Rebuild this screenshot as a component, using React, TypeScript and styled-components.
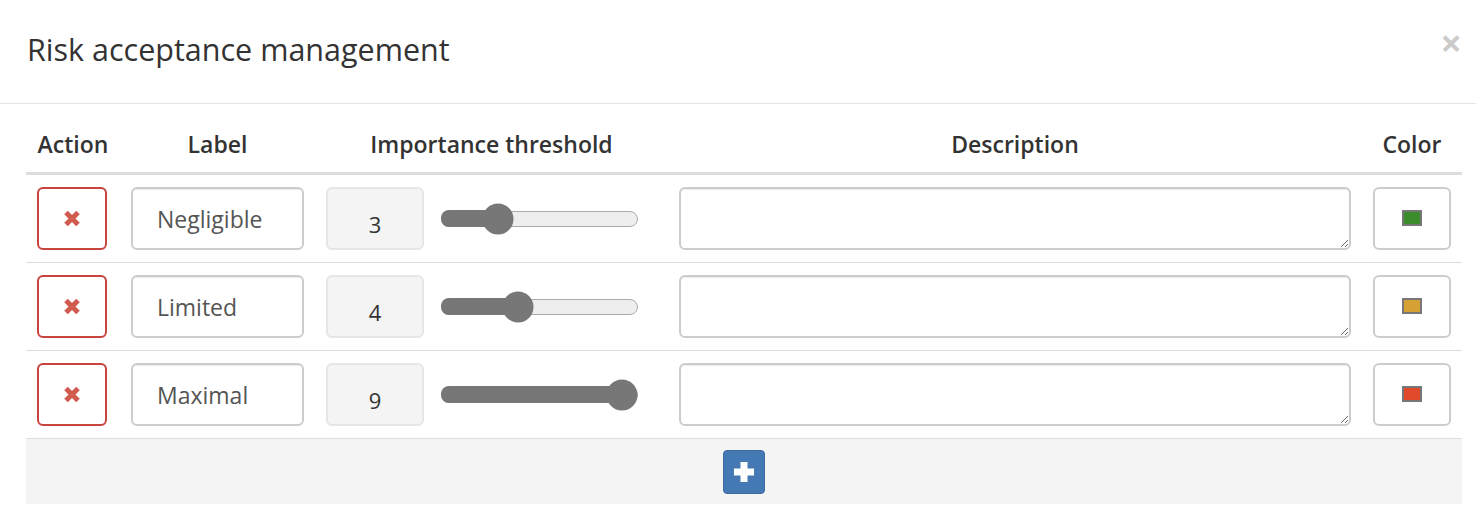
import React from "react";
import styled, { createGlobalStyle } from "styled-components";

const GlobalStyle = createGlobalStyle`
  html, body {
    margin: 0;
    padding: 0;
    background: #fff;
    font-family: "Open Sans", "Noto Sans", sans-serif;
    color: #333;
  }
`;

const StyledModal = styled.div`
  width: 1476px;
  display: flex;
  flex-direction: column;
`;

const StyledHeader = styled.div`
  height: 104px;
  border-bottom: 1.5px solid #e5e5e5;
  display: flex;
  align-items: center;
  justify-content: space-between;
  padding: 0 14px 6px 27px;
  box-sizing: border-box;
`;

const StyledTitle = styled.h4`
  margin: 0;
  font-size: 30.5px;
  font-weight: 400;
  color: #333;
`;

const StyledClose = styled.button`
  border: 0;
  background: transparent;
  padding: 0;
  margin-top: -14px;
  font-size: 38px;
  font-weight: 700;
  line-height: 1;
  color: #000;
  opacity: 0.2;
  cursor: pointer;
  font-family: "Open Sans", sans-serif;
`;

const StyledBody = styled.div`
  padding: 22px 14px 12px 26px;
`;

const StyledGrid = styled.div<{ $head?: boolean }>`
  display: grid;
  grid-template-columns: 72px 173px 331px 1fr 78px;
  column-gap: 22px;
  padding: ${(p) => (p.$head ? "2px 11px 12px" : "12px 11px")};
  border-bottom: ${(p) => (p.$head ? "3px solid #ddd" : "1.5px solid #ddd")};
  align-items: center;
`;

const StyledTh = styled.div`
  font-size: 23px;
  font-weight: 600;
  line-height: 32px;
  text-align: center;
  color: #333;
  white-space: nowrap;
`;

const StyledDeleteButton = styled.button`
  width: 70px;
  height: 63px;
  box-sizing: border-box;
  border: 2px solid #c9443c;
  border-radius: 6px;
  background: #fff;
  display: flex;
  align-items: center;
  justify-content: center;
  padding: 0;
  cursor: pointer;
`;

const StyledInput = styled.input`
  width: 100%;
  height: 63px;
  box-sizing: border-box;
  border: 2px solid #ccc;
  border-radius: 6px;
  padding: 0 0 0 24px;
  font-family: "Open Sans", sans-serif;
  font-size: 23px;
  color: #555;
  box-shadow: inset 0 1px 1px rgba(0, 0, 0, 0.075);
  outline: none;
`;

const StyledThreshold = styled.div`
  display: flex;
  align-items: center;
  gap: 17px;
`;

const StyledNumber = styled.div`
  width: 98px;
  height: 63px;
  box-sizing: border-box;
  border: 2px solid #e6e6e6;
  border-radius: 6px;
  background: #f4f4f4;
  display: flex;
  align-items: center;
  justify-content: center;
  padding-top: 10px;
  font-size: 22px;
  color: #333;
`;

const StyledTrack = styled.div`
  position: relative;
  width: 197px;
  height: 16px;
  box-sizing: border-box;
  border: 1.5px solid #aaa;
  border-radius: 8px;
  background: #eee;
`;

const StyledFill = styled.div`
  height: 100%;
  border-radius: 8px 0 0 8px;
  background: #777;
  margin: -1.5px 0 0 -1.5px;
  padding-top: 3px;
  box-sizing: content-box;
`;

const StyledThumb = styled.div`
  position: absolute;
  top: 50%;
  width: 31px;
  height: 31px;
  border-radius: 50%;
  background: #777;
  transform: translate(-50%, -50%);
`;

const StyledTextarea = styled.textarea`
  width: 100%;
  height: 63px;
  box-sizing: border-box;
  border: 2px solid #ccc;
  border-radius: 6px;
  resize: vertical;
  font-family: "Open Sans", sans-serif;
  font-size: 18px;
  box-shadow: inset 0 1px 1px rgba(0, 0, 0, 0.075);
  outline: none;
  display: block;
`;

const StyledColorButton = styled.button`
  width: 78px;
  height: 63px;
  box-sizing: border-box;
  border: 2px solid #ccc;
  border-radius: 6px;
  background: #fff;
  display: flex;
  align-items: center;
  justify-content: center;
  padding: 0 0 2px;
  cursor: pointer;
`;

const StyledSwatch = styled.span<{ $color: string }>`
  width: 20px;
  height: 16px;
  box-sizing: border-box;
  border: 2px solid #777;
  background: ${(p) => p.$color};
`;

const StyledFooter = styled.div`
  background: #f4f4f4;
  padding: 11px 0 10px;
  display: flex;
  justify-content: center;
`;

const StyledAddButton = styled.button`
  width: 42px;
  height: 44px;
  box-sizing: border-box;
  border: 1px solid #3a6a9e;
  border-radius: 4px;
  background: #4479b3;
  display: flex;
  align-items: center;
  justify-content: center;
  padding: 0;
  cursor: pointer;
`;

const RemoveIcon = () => (
  <svg width="18" height="17" viewBox="0 0 18 17">
    <path d="M3 2.5 L15 14.5 M15 2.5 L3 14.5" stroke="#d25b4f" strokeWidth="5" strokeLinecap="butt" />
  </svg>
);

const PlusIcon = () => (
  <svg width="20" height="20" viewBox="0 0 20 20">
    <path d="M6.5 0 H13.5 V6.5 H20 V13.5 H13.5 V20 H6.5 V13.5 H0 V6.5 H6.5 Z" fill="#fff" />
  </svg>
);

const MIN = 1;
const MAX = 9;

const Slider = ({ value }: { value: number }) => {
  const radius = 15.5;
  const width = 197;
  const x = radius + ((value - MIN) / (MAX - MIN)) * (width - 2 * radius);
  return (
    <StyledTrack role="slider" aria-valuenow={value} aria-valuemin={MIN} aria-valuemax={MAX}>
      <StyledFill style={{ width: x }} />
      <StyledThumb style={{ left: x - 1.5 }} />
    </StyledTrack>
  );
};

type Level = { label: string; threshold: number; color: string };

const levels: Level[] = [
  { label: "Negligible", threshold: 3, color: "#3c8c2c" },
  { label: "Limited", threshold: 4, color: "#d6a035" },
  { label: "Maximal", threshold: 9, color: "#e04a2a" },
];

export default function App() {
  return (
    <>
      <GlobalStyle />
      <StyledModal>
        <StyledHeader>
          <StyledTitle>Risk acceptance management</StyledTitle>
          <StyledClose aria-label="Close">×</StyledClose>
        </StyledHeader>
        <StyledBody>
          <StyledGrid $head>
            <StyledTh>Action</StyledTh>
            <StyledTh>Label</StyledTh>
            <StyledTh>Importance threshold</StyledTh>
            <StyledTh>Description</StyledTh>
            <StyledTh>Color</StyledTh>
          </StyledGrid>
          {levels.map((level) => (
            <StyledGrid key={level.label}>
              <StyledDeleteButton aria-label="Remove">
                <RemoveIcon />
              </StyledDeleteButton>
              <StyledInput defaultValue={level.label} />
              <StyledThreshold>
                <StyledNumber>{level.threshold}</StyledNumber>
                <Slider value={level.threshold} />
              </StyledThreshold>
              <StyledTextarea />
              <StyledColorButton aria-label="Pick color">
                <StyledSwatch $color={level.color} />
              </StyledColorButton>
            </StyledGrid>
          ))}
          <StyledFooter>
            <StyledAddButton aria-label="Add">
              <PlusIcon />
            </StyledAddButton>
          </StyledFooter>
        </StyledBody>
      </StyledModal>
    </>
  );
}
